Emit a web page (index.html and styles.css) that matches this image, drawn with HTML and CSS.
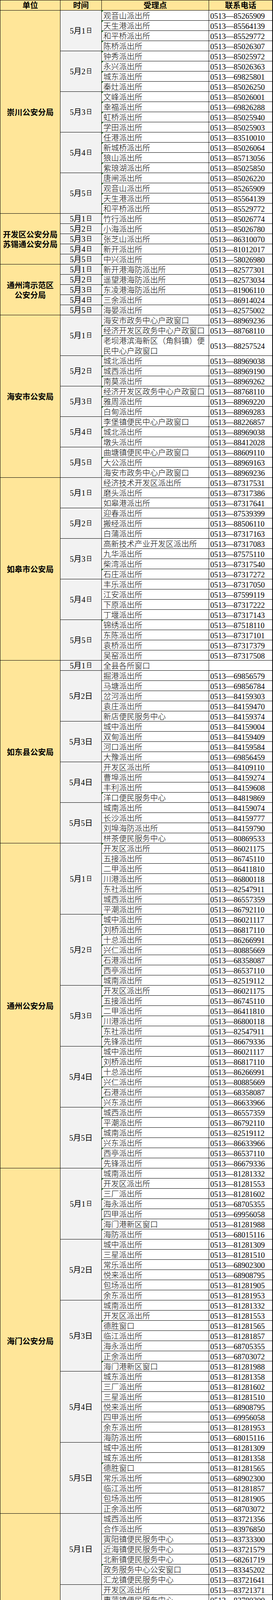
FILE: index.html
```html
<!DOCTYPE html>
<html lang="zh-CN">
<head>
<meta charset="utf-8">
<title>五一假期户政窗口值班安排</title>
<link rel="stylesheet" href="styles.css">
</head>
<body>
<div class="sheet">
<div class="hd">单位</div><div class="hd">时间</div><div class="hd">受理点</div><div class="hd">联系电话</div>

<div class="unit r20">崇川公安分局</div>
<div class="date r4">5月1<span class="ri">日</span></div>
<div class="place m">观音山派出所</div><div class="phone">0513—85265909</div>
<div class="place m">天生港派出所</div><div class="phone">0513—85564139</div>
<div class="place m">和平桥派出所</div><div class="phone">0513—85529772</div>
<div class="place m">陈桥派出所</div><div class="phone">0513—85026307</div>
<div class="date r4">5月2<span class="ri">日</span></div>
<div class="place m">钟秀派出所</div><div class="phone">0513—85025972</div>
<div class="place m">永兴派出所</div><div class="phone">0513—85026363</div>
<div class="place m">城东派出所</div><div class="phone">0513—69825801</div>
<div class="place m">秦灶派出所</div><div class="phone">0513—85026250</div>
<div class="date r4">5月3<span class="ri">日</span></div>
<div class="place m">文峰派出所</div><div class="phone">0513—85026001</div>
<div class="place m">幸福派出所</div><div class="phone">0513—69826288</div>
<div class="place m">虹桥派出所</div><div class="phone">0513—85025940</div>
<div class="place m">学田派出所</div><div class="phone">0513—85025903</div>
<div class="date r4">5月4<span class="ri">日</span></div>
<div class="place m">任港派出所</div><div class="phone">0513—83510010</div>
<div class="place m">新城桥派出所</div><div class="phone">0513—85026064</div>
<div class="place m">狼山派出所</div><div class="phone">0513—85713056</div>
<div class="place m">紫琅湖派出所</div><div class="phone">0513—85025850</div>
<div class="date r4">5月5<span class="ri">日</span></div>
<div class="place m">唐闸派出所</div><div class="phone">0513—85026220</div>
<div class="place m">观音山派出所</div><div class="phone">0513—85265909</div>
<div class="place m">天生港派出所</div><div class="phone">0513—85564139</div>
<div class="place m">和平桥派出所</div><div class="phone">0513—85529772</div>

<div class="unit r5">开发区公安分局<br>苏锡通公安分局</div>
<div class="date">5月1<span class="ri">日</span></div><div class="place m">竹行派出所</div><div class="phone">0513—85026774</div>
<div class="date">5月2<span class="ri">日</span></div><div class="place m">小海派出所</div><div class="phone">0513—85026780</div>
<div class="date">5月3<span class="ri">日</span></div><div class="place m">张芝山派出所</div><div class="phone">0513—86310070</div>
<div class="date">5月4<span class="ri">日</span></div><div class="place m">新开派出所</div><div class="phone">0513—81012017</div>
<div class="date">5月5<span class="ri">日</span></div><div class="place m">中兴派出所</div><div class="phone">0513—58026980</div>

<div class="unit r5">通州湾示范区<br>公安分局</div>
<div class="date">5月1<span class="ri">日</span></div><div class="place m">新开港海防派出所</div><div class="phone">0513—82577301</div>
<div class="date">5月2<span class="ri">日</span></div><div class="place m">遥望港海防派出所</div><div class="phone">0513—82573034</div>
<div class="date">5月3<span class="ri">日</span></div><div class="place m">东凌港海防派出所</div><div class="phone">0513—81906110</div>
<div class="date">5月4<span class="ri">日</span></div><div class="place m">三余派出所</div><div class="phone">0513—86914024</div>
<div class="date">5月5<span class="ri">日</span></div><div class="place m">海晏派出所</div><div class="phone">0513—82575002</div>

<div class="unit r16">海安市公安局</div>
<div class="date r4">5月1<span class="ri">日</span></div>
<div class="place">海安市政务中心户政窗口</div><div class="phone">0513—88969236</div>
<div class="place m">经济开发区政务中心户政窗口</div><div class="phone">0513—88768110</div>
<div class="place m wrap r2">老坝港滨海新区（角斜镇）便<br>民中心户政窗口</div><div class="phone r2">0513—88257524</div>
<div class="date r3">5月2<span class="ri">日</span></div>
<div class="place m">城北派出所</div><div class="phone">0513—88969038</div>
<div class="place m">城西派出所</div><div class="phone">0513—88969190</div>
<div class="place m">南莫派出所</div><div class="phone">0513—88969262</div>
<div class="date r3">5月3<span class="ri">日</span></div>
<div class="place m">经济开发区政务中心户政窗口</div><div class="phone">0513—88768110</div>
<div class="place m">雅周派出所</div><div class="phone">0513—88969220</div>
<div class="place m">白甸派出所</div><div class="phone">0513—88969283</div>
<div class="date r3">5月4<span class="ri">日</span></div>
<div class="place">李堡镇便民中心户政窗口</div><div class="phone">0513—88226857</div>
<div class="place m">城北派出所</div><div class="phone">0513—88969038</div>
<div class="place m">墩头派出所</div><div class="phone">0513—88412028</div>
<div class="date r3">5月5<span class="ri">日</span></div>
<div class="place">曲塘镇便民中心户政窗口</div><div class="phone">0513—88609110</div>
<div class="place m">大公派出所</div><div class="phone">0513—88969163</div>
<div class="place">海安市政务中心户政窗口</div><div class="phone">0513—88969236</div>

<div class="unit r18">如皋市公安局</div>
<div class="date r3">5月1<span class="ri">日</span></div>
<div class="place">经济技术开发区派出所</div><div class="phone">0513—87317531</div>
<div class="place">磨头派出所</div><div class="phone">0513—87317386</div>
<div class="place">如皋港派出所</div><div class="phone">0513—87317641</div>
<div class="date r3">5月2<span class="ri">日</span></div>
<div class="place">迎春派出所</div><div class="phone">0513—87539399</div>
<div class="place">搬经派出所</div><div class="phone">0513—88506110</div>
<div class="place">白蒲派出所</div><div class="phone">0513—87317163</div>
<div class="date r4">5月3<span class="ri">日</span></div>
<div class="place">高新技术产业开发区派出所</div><div class="phone">0513—87317083</div>
<div class="place">九华派出所</div><div class="phone">0513—87575110</div>
<div class="place">柴湾派出所</div><div class="phone">0513—87317540</div>
<div class="place m">石庄派出所</div><div class="phone">0513—87317272</div>
<div class="date r4">5月4<span class="ri">日</span></div>
<div class="place">丰乐派出所</div><div class="phone">0513—87317050</div>
<div class="place">江安派出所</div><div class="phone">0513—87599119</div>
<div class="place">下原派出所</div><div class="phone">0513—87317222</div>
<div class="place">丁堰派出所</div><div class="phone">0513—87317143</div>
<div class="date r4">5月5<span class="ri">日</span></div>
<div class="place m">锦绣派出所</div><div class="phone">0513—87518110</div>
<div class="place">东陈派出所</div><div class="phone">0513—87317101</div>
<div class="place">袁桥派出所</div><div class="phone">0513—87317379</div>
<div class="place">吴窑派出所</div><div class="phone">0513—87317508</div>

<div class="unit r18">如东县公安局</div>
<div class="date">5月1<span class="ri">日</span></div><div class="place">全县各所窗口</div><div class="phone"></div>
<div class="date r5">5月2日</div>
<div class="place">掘港派出所</div><div class="phone">0513—69856579</div>
<div class="place">马塘派出所</div><div class="phone">0513—69856784</div>
<div class="place">岔河派出所</div><div class="phone">0513—84159303</div>
<div class="place">袁庄派出所</div><div class="phone">0513—84159470</div>
<div class="place">新店便民服务中心</div><div class="phone">0513—84159374</div>
<div class="date r4">5月3日</div>
<div class="place">城中派出所</div><div class="phone">0513—84159004</div>
<div class="place">双甸派出所</div><div class="phone">0513—84159409</div>
<div class="place">河口派出所</div><div class="phone">0513—84159584</div>
<div class="place">大豫派出所</div><div class="phone">0513—69856459</div>
<div class="date r4">5月4日</div>
<div class="place">开发区派出所</div><div class="phone">0513—84109110</div>
<div class="place">曹埠派出所</div><div class="phone">0513—84159274</div>
<div class="place">丰利派出所</div><div class="phone">0513—84159608</div>
<div class="place m">洋口便民服务中心</div><div class="phone">0513—84819869</div>
<div class="date r4">5月5日</div>
<div class="place">城南派出所</div><div class="phone">0513—84159074</div>
<div class="place">长沙派出所</div><div class="phone">0513—84159777</div>
<div class="place">刘埠海防派出所</div><div class="phone">0513—84159790</div>
<div class="place">栟茶便民服务中心</div><div class="phone">0513—80869533</div>

<div class="unit r32">通州公安分局</div>
<div class="date r7">5月1<span class="ri">日</span></div>
<div class="place m">开发区派出所</div><div class="phone">0513—86021175</div>
<div class="place">五接派出所</div><div class="phone">0513—86745110</div>
<div class="place">二甲派出所</div><div class="phone">0513—86411810</div>
<div class="place">川港派出所</div><div class="phone">0513—86800118</div>
<div class="place">东社派出所</div><div class="phone">0513—82547911</div>
<div class="place">城西派出所</div><div class="phone">0513—86557359</div>
<div class="place">平潮派出所</div><div class="phone">0513—86792110</div>
<div class="date r7">5月2<span class="ri">日</span></div>
<div class="place m">城中派出所</div><div class="phone">0513—86021117</div>
<div class="place m">刘桥派出所</div><div class="phone">0513—86817110</div>
<div class="place m">十总派出所</div><div class="phone">0513—86266991</div>
<div class="place m">兴仁派出所</div><div class="phone">0513—80885669</div>
<div class="place m">石港派出所</div><div class="phone">0513—68358087</div>
<div class="place m">西亭派出所</div><div class="phone">0513—86537110</div>
<div class="place m">城南派出所</div><div class="phone">0513—82519112</div>
<div class="date r6">5月3<span class="ri">日</span></div>
<div class="place m">开发区派出所</div><div class="phone">0513—86021175</div>
<div class="place m">五接派出所</div><div class="phone">0513—86745110</div>
<div class="place m">二甲派出所</div><div class="phone">0513—86411810</div>
<div class="place m">川港派出所</div><div class="phone">0513—86800118</div>
<div class="place m">东社派出所</div><div class="phone">0513—82547911</div>
<div class="place m">先锋派出所</div><div class="phone">0513—86679336</div>
<div class="date r6">5月4日</div>
<div class="place m">城中派出所</div><div class="phone">0513—86021117</div>
<div class="place m">刘桥派出所</div><div class="phone">0513—86817110</div>
<div class="place m">十总派出所</div><div class="phone">0513—86266991</div>
<div class="place m">兴仁派出所</div><div class="phone">0513—80885669</div>
<div class="place m">石港派出所</div><div class="phone">0513—68358087</div>
<div class="place m">兴东派出所</div><div class="phone">0513—86633966</div>
<div class="date r6">5月5日</div>
<div class="place m">城西派出所</div><div class="phone">0513—86557359</div>
<div class="place m">平潮派出所</div><div class="phone">0513—86792110</div>
<div class="place m">城南派出所</div><div class="phone">0513—82519112</div>
<div class="place m">兴东派出所</div><div class="phone">0513—86633966</div>
<div class="place m">西亭派出所</div><div class="phone">0513—86537110</div>
<div class="place m">先锋派出所</div><div class="phone">0513—86679336</div>

<div class="unit r34">海门公安分局</div>
<div class="date r7">5月1<span class="ri">日</span></div>
<div class="place m">城南派出所</div><div class="phone">0513—81281332</div>
<div class="place m">开发区派出所</div><div class="phone">0513—81281553</div>
<div class="place m">三厂派出所</div><div class="phone">0513—81281602</div>
<div class="place m">海永派出所</div><div class="phone">0513—68705355</div>
<div class="place m">四甲派出所</div><div class="phone">0513—69956058</div>
<div class="place m">海门港新区窗口</div><div class="phone">0513—81281988</div>
<div class="place m">海防派出所</div><div class="phone">0513—68015116</div>
<div class="date r6">5月2日</div>
<div class="place">城中派出所</div><div class="phone">0513—81281309</div>
<div class="place">三星派出所</div><div class="phone">0513—81281510</div>
<div class="place">常乐派出所</div><div class="phone">0513—68902300</div>
<div class="place">悦来派出所</div><div class="phone">0513—68908795</div>
<div class="place">包场派出所</div><div class="phone">0513—81281905</div>
<div class="place">余东派出所</div><div class="phone">0513—81281953</div>
<div class="date r7">5月3日</div>
<div class="place">城南派出所</div><div class="phone">0513—81281332</div>
<div class="place">开发区派出所</div><div class="phone">0513—81281553</div>
<div class="place m">德胜窗口</div><div class="phone">0513—81281565</div>
<div class="place">临江派出所</div><div class="phone">0513—81281857</div>
<div class="place">海永派出所</div><div class="phone">0513—68705355</div>
<div class="place">正余派出所</div><div class="phone">0513—68703072</div>
<div class="place m">海门港新区窗口</div><div class="phone">0513—81281988</div>
<div class="date r7">5月4日</div>
<div class="place">城东派出所</div><div class="phone">0513—81281358</div>
<div class="place">三厂派出所</div><div class="phone">0513—81281602</div>
<div class="place">三星派出所</div><div class="phone">0513—81281510</div>
<div class="place">悦来派出所</div><div class="phone">0513—68908795</div>
<div class="place">四甲派出所</div><div class="phone">0513—69956058</div>
<div class="place">余东派出所</div><div class="phone">0513—81281953</div>
<div class="place">海防派出所</div><div class="phone">0513—68015116</div>
<div class="date r7">5月5日</div>
<div class="place">城中派出所</div><div class="phone">0513—81281309</div>
<div class="place">城东派出所</div><div class="phone">0513—81281358</div>
<div class="place m">德胜窗口</div><div class="phone">0513—81281565</div>
<div class="place">常乐派出所</div><div class="phone">0513—68902300</div>
<div class="place">临江派出所</div><div class="phone">0513—81281857</div>
<div class="place">包场派出所</div><div class="phone">0513—81281905</div>
<div class="place">正余派出所</div><div class="phone">0513—68703072</div>

<div class="unit r32">启东市公安局</div>
<div class="date r7">5月1日</div>
<div class="place">城西派出所</div><div class="phone">0513—83721356</div>
<div class="place">合作派出所</div><div class="phone">0513—83976850</div>
<div class="place">寅阳镇便民服务中心</div><div class="phone">0513—83733300</div>
<div class="place">近海镇便民服务中心</div><div class="phone">0513—83721579</div>
<div class="place">北新镇便民服务中心</div><div class="phone">0513—68261719</div>
<div class="place m">政务服务中心公安窗口</div><div class="phone">0513—83345202</div>
<div class="place">汇龙镇便民服务中心</div><div class="phone">0513—83721641</div>
<div class="date r6">5月2日</div>
<div class="place">开发区派出所</div><div class="phone">0513—83721371</div>
<div class="place">惠萍镇便民服务中心</div><div class="phone">0513—83780300</div>
<div class="place">东海派出所</div><div class="phone">0513—83721501</div>
<div class="place">王鲍镇便民服务中心</div><div class="phone">0513—69961485</div>
<div class="place">吕四港镇便民服务中心</div><div class="phone">0513—68263686</div>
<div class="place">南阳派出所</div><div class="phone">0513—69873120</div>
<div class="date r6">5月3日</div>
<div class="place m">政务中心户籍窗口</div><div class="phone">0513—83345202</div>
<div class="place">汇龙镇便民服务中心</div><div class="phone">0513—83721641</div>
<div class="place">南阳派出所</div><div class="phone">0513—69873120</div>
<div class="place">海复派出所</div><div class="phone">0513—69873130</div>
<div class="place">连兴港海防派出所</div><div class="phone">0513—83778400</div>
<div class="place">启隆镇便民服务中心</div><div class="phone">0513—83721399</div>
<div class="date r7">5月4日</div>
<div class="place">城西派出所</div><div class="phone">0513—83721356</div>
<div class="place">合作派出所</div><div class="phone">0513—83976850</div>
<div class="place">寅阳镇便民服务中心</div><div class="phone">0513—83733300</div>
<div class="place">近海镇便民服务中心</div><div class="phone">0513—83721579</div>
<div class="place">北新镇便民服务中心</div><div class="phone">0513—68261719</div>
<div class="place">海复派出所</div><div class="phone">0513—69873130</div>
<div class="place">连兴港海防派出所</div><div class="phone">0513—83778400</div>
<div class="date r6">5月5日</div>
<div class="place">开发区派出所</div><div class="phone">0513—83721371</div>
<div class="place">惠萍镇便民服务中心</div><div class="phone">0513—83780300</div>
<div class="place">东海派出所</div><div class="phone">0513—83721501</div>
<div class="place">王鲍镇便民服务中心</div><div class="phone">0513—69961485</div>
<div class="place">吕四港镇便民服务中心</div><div class="phone">0513—68263686</div>
<div class="place">启隆镇便民服务中心</div><div class="phone">0513—83721399</div>
</div>
</body>
</html>
```

FILE: styles.css
```css
html, body {
  margin: 0;
  padding: 0;
  background: #ffffff;
}

/* the grid lines are the black background showing through 1px gaps */
.sheet {
  display: grid;
  grid-template-columns: 153px 105px 274px 162px;
  grid-auto-rows: 25px;
  gap: 1px;
  padding: 1px 2px 2px 1px;
  width: 700px;
  box-sizing: border-box;
  background: #000;
  color: #000;
}

.hd,
.unit,
.date,
.place,
.phone {
  display: flex;
  align-items: center;
  min-width: 0;
  white-space: nowrap;
}

.hd {
  justify-content: center;
  background: #ffe699;
  padding-bottom: 1px;
  font: 700 20px/24px "Noto Sans CJK SC", sans-serif;
}

.unit {
  grid-column: 1;
  justify-content: center;
  text-align: center;
  background: #ffe699;
  font: 700 20px/25px "Noto Sans CJK SC", sans-serif;
}

.date {
  grid-column: 2;
  justify-content: center;
  background: #f2f2f2;
  font: 400 20px/20px "Liberation Serif", "Noto Sans CJK SC", serif;
}

.date .ri {
  font-size: 15px;
  margin-left: 2px;
  position: relative;
  top: -1px;
}

.place {
  grid-column: 3;
  position: relative;
  background: #fff;
  padding: 1px 0 0 4px;
  font: 300 20px/22px "Noto Sans CJK SC", sans-serif;
}

.place.wrap {
  white-space: normal;
  line-height: 26px;
  padding-top: 0;
}

.phone {
  grid-column: 4;
  background: #fff;
  padding: 2px 0 0 3px;
  font: 400 20px/22px "Liberation Serif", serif;
}

/* Excel-style green corner marker */
.m::before {
  content: "";
  position: absolute;
  top: 0;
  left: 0;
  border-top: 4px solid #1e8c1e;
  border-right: 4px solid transparent;
}

.r2 { grid-row: span 2; }
.r3 { grid-row: span 3; }
.r4 { grid-row: span 4; }
.r5 { grid-row: span 5; }
.r6 { grid-row: span 6; }
.r7 { grid-row: span 7; }
.r16 { grid-row: span 16; }
.r18 { grid-row: span 18; }
.r20 { grid-row: span 20; }
.r32 { grid-row: span 32; }
.r34 { grid-row: span 34; }
```
